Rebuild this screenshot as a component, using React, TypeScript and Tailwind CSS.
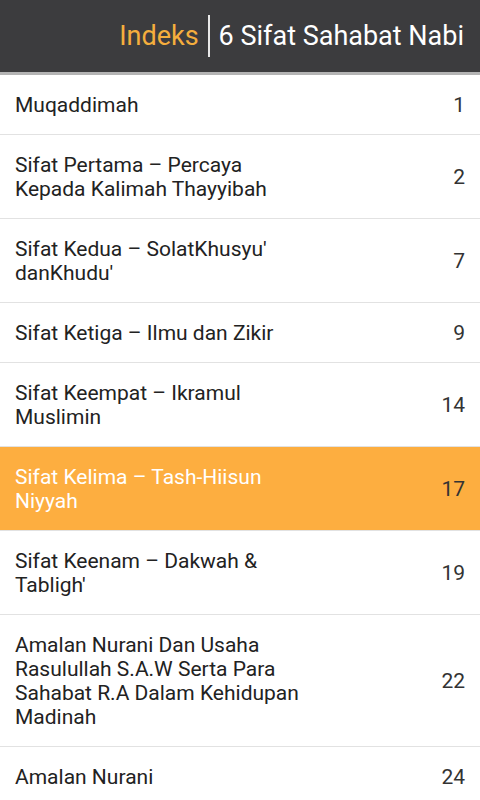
const items = [
	{ title: 'Muqaddimah', page: 1 },
	{ title: 'Sifat Pertama – Percaya Kepada Kalimah Thayyibah', page: 2 },
	{ title: "Sifat Kedua – SolatKhusyu' danKhudu'", page: 7 },
	{ title: 'Sifat Ketiga – Ilmu dan Zikir', page: 9 },
	{ title: 'Sifat Keempat – Ikramul Muslimin', page: 14 },
	{ title: 'Sifat Kelima – Tash-Hiisun Niyyah', page: 17, active: true },
	{ title: "Sifat Keenam – Dakwah & Tabligh'", page: 19 },
	{
		title:
			'Amalan Nurani Dan Usaha Rasulullah S.A.W Serta Para Sahabat R.A Dalam Kehidupan Madinah',
		page: 22,
	},
	{ title: 'Amalan Nurani', page: 24 },
];

export default function App() {
	return (
		<div
			className="w-[480px] h-[800px] overflow-hidden bg-white"
			style={{ fontFamily: 'Roboto, "Noto Sans", sans-serif' }}
		>
			<header className="h-[75px] bg-[#3c3c3e] border-b-[3px] border-[#b4b4b4] flex items-center justify-end pr-[16px]">
				<span className="text-[27px] text-[#f5ae3d] leading-none">Indeks</span>
				<span className="w-[2px] h-[42px] bg-[#e8e8e8] mx-[9px]" />
				<span className="text-[27px] text-white leading-none">
					6 Sifat Sahabat Nabi
				</span>
			</header>
			<ul>
				{items.map((it) => (
					<li
						key={it.title}
						className={
							'flex items-center justify-between pl-[15px] pr-[15px] pt-[18px] pb-[17px] border-b border-[#e2e2e2] ' +
							(it.active ? 'bg-[#fdae40]' : '')
						}
					>
						<span
							className={
								'w-[294px] text-[21px] leading-[24px] ' +
								(it.active ? 'text-white' : 'text-[#222222]')
							}
						>
							{it.title}
						</span>
						<span className="text-[21px] leading-[24px] text-[#333333]">
							{it.page}
						</span>
					</li>
				))}
			</ul>
		</div>
	);
}
